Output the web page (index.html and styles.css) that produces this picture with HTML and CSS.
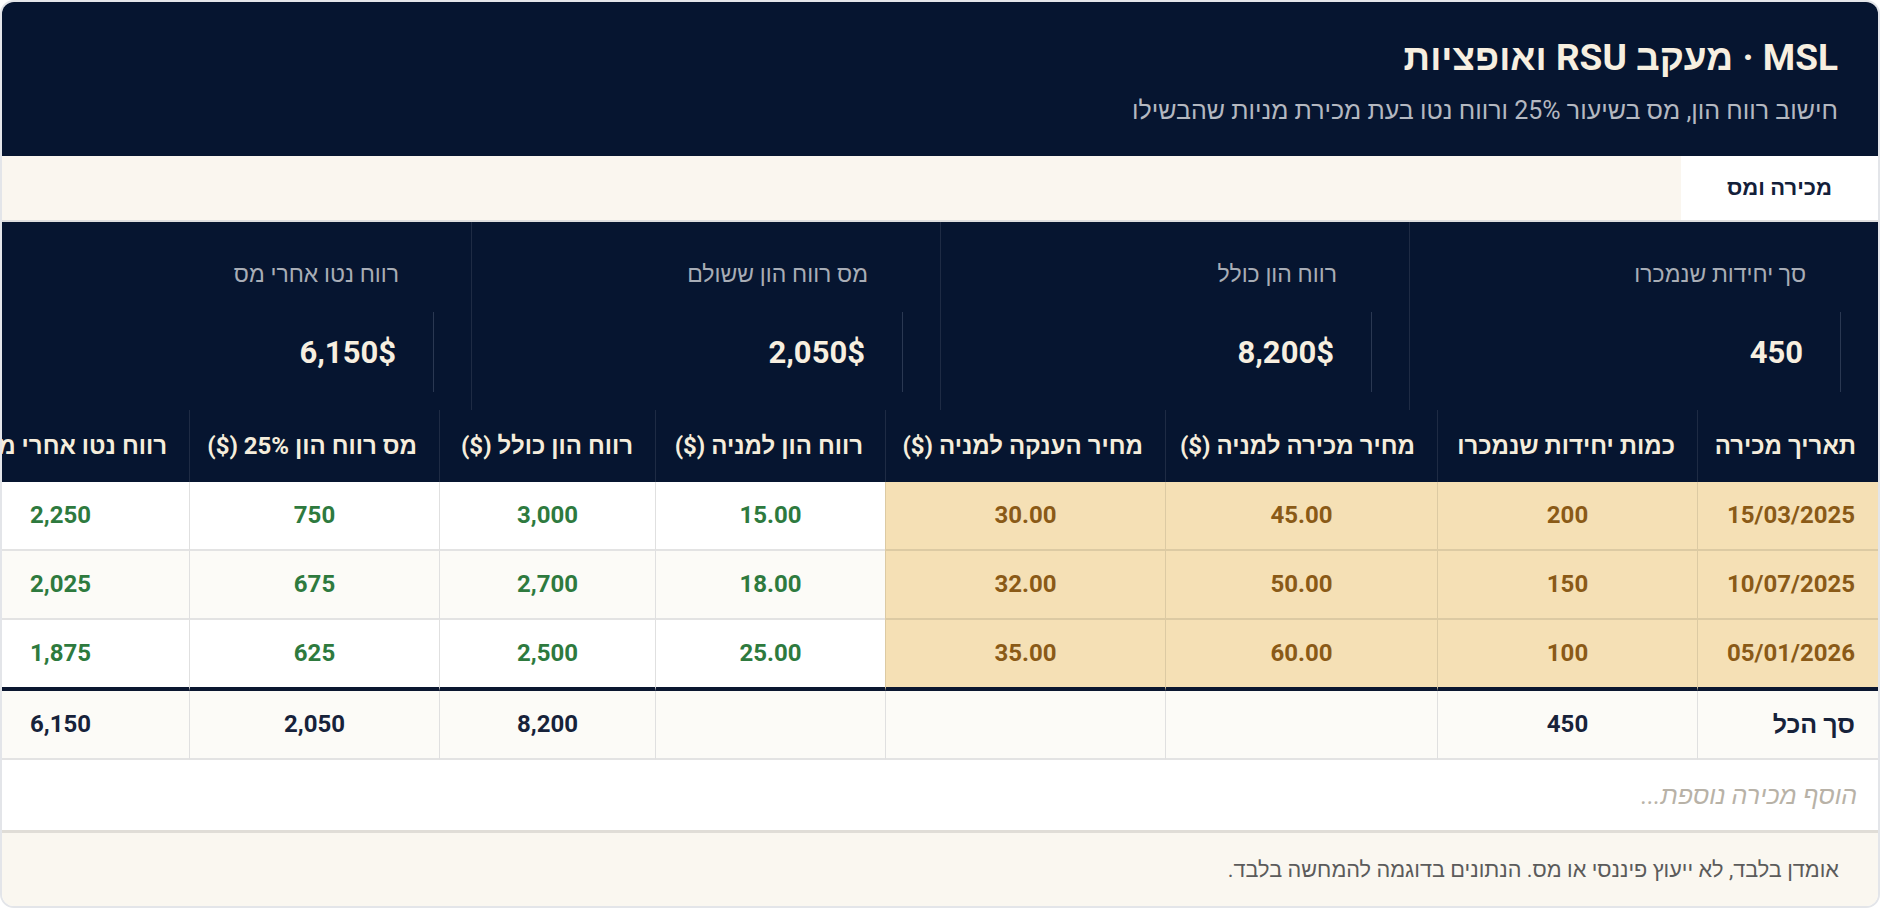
FILE: index.html
```html
<!DOCTYPE html>
<html lang="he" dir="rtl">
<head>
<meta charset="utf-8">
<title>MSL · מעקב RSU ואופציות</title>
<link rel="stylesheet" href="styles.css">
</head>
<body>
<div class="card">
  <header class="hero">
    <h1 class="title">MSL · מעקב RSU ואופציות</h1>
    <p class="subtitle">חישוב רווח הון, מס בשיעור 25% ורווח נטו בעת מכירת מניות שהבשילו</p>
  </header>
  <nav class="tabs">
    <div class="tab active">מכירה ומס</div>
  </nav>
  <section class="stats">
    <div class="stat">
      <div class="stat-label">סך יחידות שנמכרו</div>
      <div class="stat-value">450</div>
    </div>
    <div class="stat">
      <div class="stat-label">רווח הון כולל</div>
      <div class="stat-value">8,200$</div>
    </div>
    <div class="stat">
      <div class="stat-label">מס רווח הון ששולם</div>
      <div class="stat-value">2,050$</div>
    </div>
    <div class="stat">
      <div class="stat-label">רווח נטו אחרי מס</div>
      <div class="stat-value">6,150$</div>
    </div>
  </section>
  <div class="table-wrap">
    <table class="grid">
      <colgroup>
        <col class="w1"><col class="w2"><col class="w3"><col class="w4"><col class="w5"><col class="w6"><col class="w7"><col class="w8">
      </colgroup>
      <thead>
        <tr>
          <th>תאריך מכירה</th>
          <th>כמות יחידות שנמכרו</th>
          <th>מחיר מכירה למניה ($)</th>
          <th>מחיר הענקה למניה ($)</th>
          <th>רווח הון למניה ($)</th>
          <th>רווח הון כולל ($)</th>
          <th>מס רווח הון 25% ($)</th>
          <th>רווח נטו אחרי מס</th>
        </tr>
      </thead>
      <tbody>
        <tr>
          <td class="in first">15/03/2025</td>
          <td class="in">200</td>
          <td class="in">45.00</td>
          <td class="in">30.00</td>
          <td class="out">15.00</td>
          <td class="out">3,000</td>
          <td class="out">750</td>
          <td class="out">2,250</td>
        </tr>
        <tr class="alt">
          <td class="in first">10/07/2025</td>
          <td class="in">150</td>
          <td class="in">50.00</td>
          <td class="in">32.00</td>
          <td class="out">18.00</td>
          <td class="out">2,700</td>
          <td class="out">675</td>
          <td class="out">2,025</td>
        </tr>
        <tr>
          <td class="in first">05/01/2026</td>
          <td class="in">100</td>
          <td class="in">60.00</td>
          <td class="in">35.00</td>
          <td class="out">25.00</td>
          <td class="out">2,500</td>
          <td class="out">625</td>
          <td class="out">1,875</td>
        </tr>
      </tbody>
      <tfoot>
        <tr>
          <td class="first total-label">סך הכל</td>
          <td>450</td>
          <td></td>
          <td></td>
          <td></td>
          <td>8,200</td>
          <td>2,050</td>
          <td>6,150</td>
        </tr>
      </tfoot>
    </table>
  </div>
  <div class="add-row">הוסף מכירה נוספת...</div>
  <footer class="note">אומדן בלבד, לא ייעוץ פיננסי או מס. הנתונים בדוגמה להמחשה בלבד.</footer>
</div>
</body>
</html>
```
FILE: styles.css
```css
* { box-sizing: border-box; }
html, body { margin: 0; padding: 0; background: #ffffff; }
body {
  font-family: Roboto, sans-serif;
  color: #13203a;
}
.card {
  width: 1880px;
  height: 908px;
  border: 2px solid #e3e5e9;
  border-radius: 14px;
  overflow: hidden;
  display: flex;
  flex-direction: column;
  background: #ffffff;
}
.hero {
  background: #061530;
  padding: 36px 40px 0;
  height: 154px;
}
.title {
  margin: 0;
  font-size: 37px;
  line-height: 40px;
  font-weight: 700;
  color: #f7efe0;
}
.subtitle {
  margin: 18px 0 0;
  font-size: 25px;
  line-height: 30px;
  color: #b4b8c0;
  font-weight: 400;
}
.tabs {
  display: flex;
  background: #faf6ef;
  height: 66px;
  border-bottom: 2px solid #dedede;
}
.tab {
  display: flex;
  align-items: center;
  padding: 0 46px;
  font-size: 22px;
  font-weight: 700;
  color: #13203a;
}
.tab.active { background: #ffffff; }
.stats {
  display: grid;
  grid-template-columns: repeat(4, 1fr);
  background: #061530;
  height: 188px;
}
.stat {
  padding: 40px 37px 18px 20px;
  border-left: 1px solid #1e2b44;
  display: flex;
  flex-direction: column;
}
.stat:last-child { border-left: none; }
.stat-label {
  font-size: 23px;
  line-height: 26px;
  color: #a8adb6;
  margin-right: 35px;
}
.stat-value {
  margin-top: 24px;
  height: 80px;
  display: flex;
  align-items: center;
  border-right: 1px solid #2a3852;
  padding-right: 37px;
  font-size: 31px;
  font-weight: 700;
  color: #f7efe0;
}
.table-wrap {
  overflow-x: auto;
  scrollbar-width: none;
  direction: rtl;
}
.table-wrap::-webkit-scrollbar { display: none; }
.grid {
  border-collapse: separate;
  border-spacing: 0;
  table-layout: fixed;
  width: 1947px;
}
.w1 { width: 181px; }
.w2 { width: 260px; }
.w3 { width: 272px; }
.w4 { width: 280px; }
.w5 { width: 230px; }
.w6 { width: 216px; }
.w7 { width: 250px; }
.w8 { width: 258px; }
.grid th {
  background: #061530;
  color: #f5eddc;
  font-size: 24px;
  font-weight: 700;
  text-align: right;
  white-space: nowrap;
  overflow: hidden;
  height: 72px;
  padding: 0 22px;
  border-left: 1px solid #1e2b44;
}
.grid td {
  font-size: 24px;
  font-weight: 700;
  line-height: 29px;
  padding: 19px 22px;
  text-align: center;
  white-space: nowrap;
  border-bottom: 2px solid #e3e3e3;
  border-left: 1px solid #e0e0e0;
  background: #ffffff;
}
.grid td.first { text-align: right; padding-right: 23px; }
.grid td.in {
  background: #f5e0b5;
  color: #8a5a17;
  border-bottom-color: #dccaa3;
  border-left-color: #dccaa3;
}
.grid td.out { color: #2e7a3e; }
.grid tr.alt td.out { background: #fcfbf7; }
.grid tbody tr:last-child td { border-bottom: 4px solid #0b1730; }
.grid tfoot td {
  background: #fcfbf7;
  color: #17223a;
}
.grid td.total-label { font-size: 25px; }
.add-row {
  height: 73px;
  border-bottom: 3px solid #e0ddd7;
  padding: 0 21px;
  display: flex;
  align-items: center;
  font-size: 25px;
  font-style: italic;
  color: #b8b2a7;
  background: #ffffff;
}
.note {
  flex: 1;
  background: #faf7f0;
  padding: 0 39px;
  display: flex;
  align-items: center;
  font-size: 21.7px;
  color: #5b5b5b;
}
```
